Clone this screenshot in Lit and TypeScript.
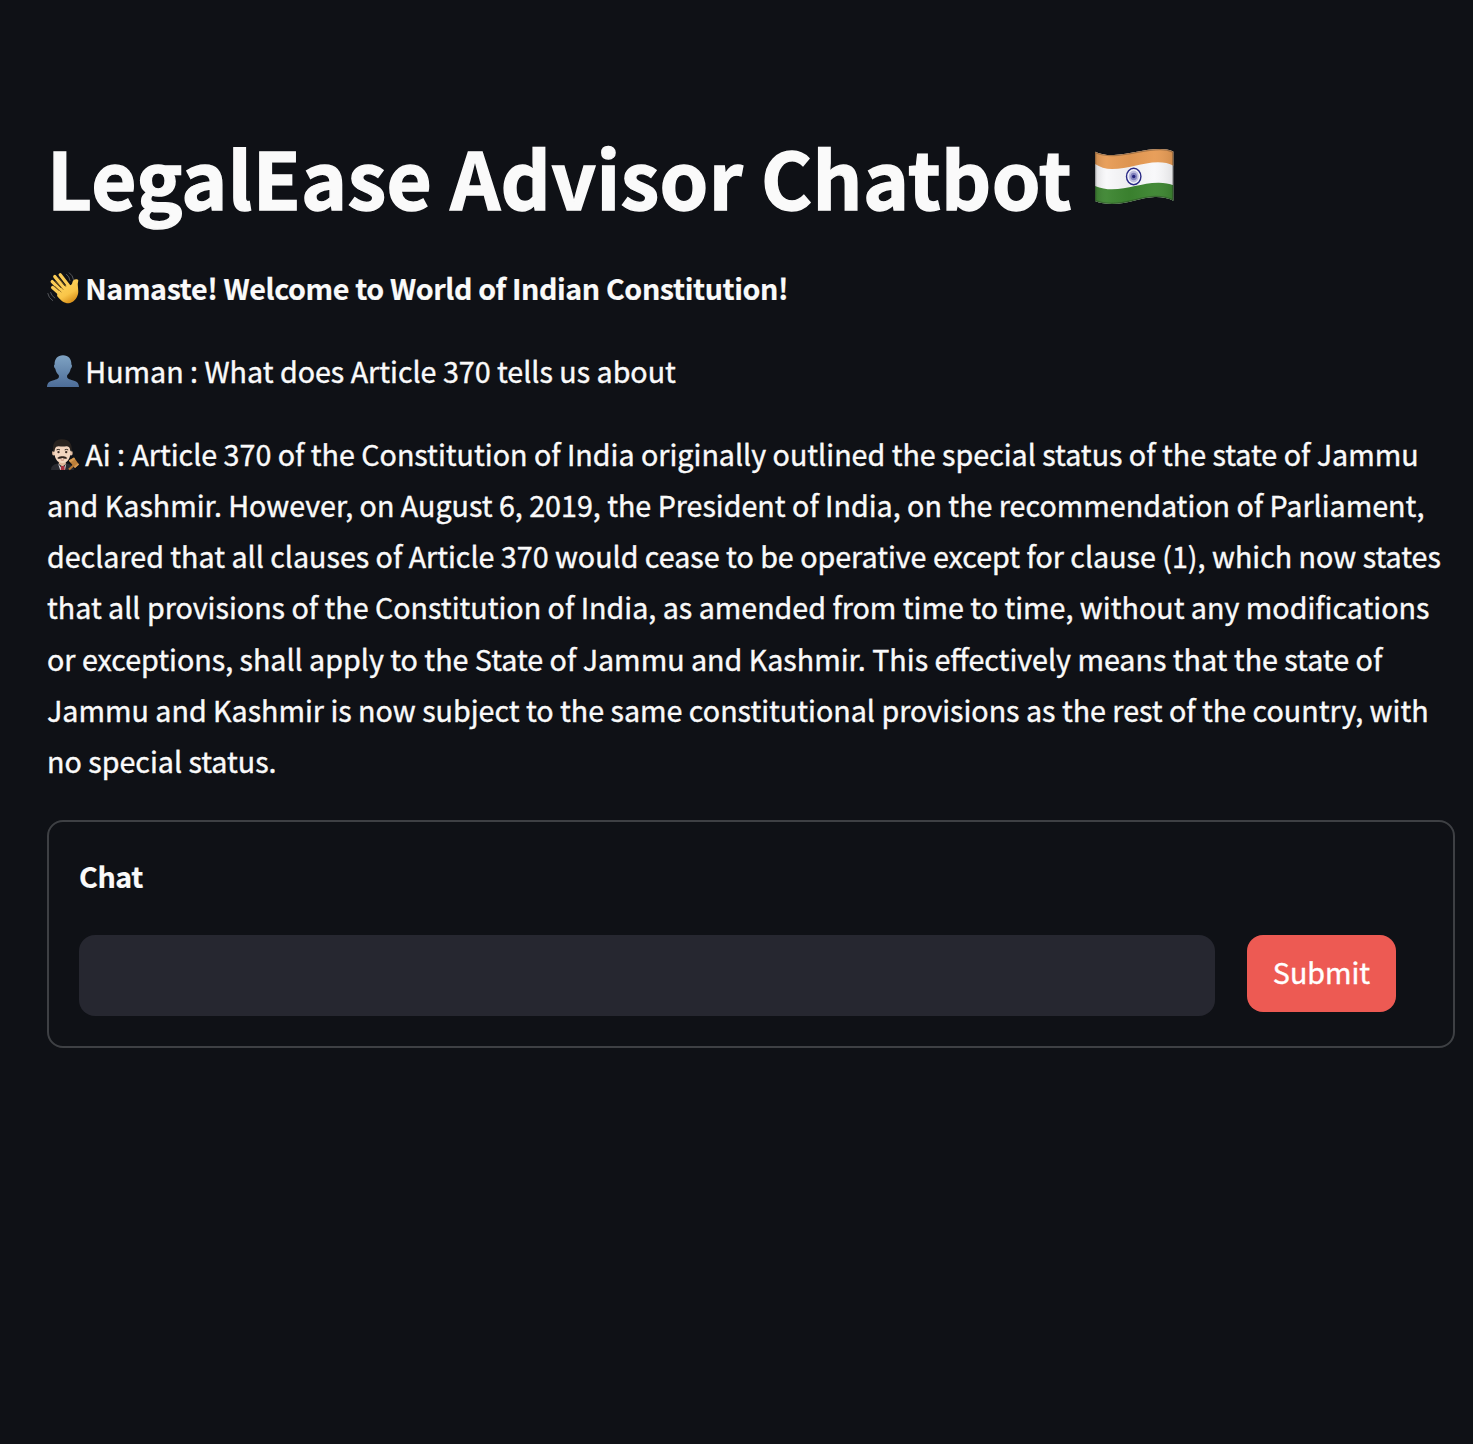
import { LitElement, html, css } from "lit";
import { customElement } from "lit/decorators.js";

const flag = html`<svg class="flag" viewBox="0 0 80 58" role="img" aria-label="India">
  <defs>
    <clipPath id="cloth"><path d="M1 3.700C7 6.500 13 7.300 20 7C36 6.300 50 1 66 1C71 1 75 1.700 79.300 3.500V52.700C74 50 68 48.800 61 49C46 49.500 34 56 18 56C12 56 6 55.300 1 53Z" /></clipPath>
    <linearGradient id="shade" x1="0" x2="1" y1="0" y2="0">
      <stop offset="0" stop-color="#000" stop-opacity=".14" />
      <stop offset=".16" stop-color="#fff" stop-opacity=".05" />
      <stop offset=".45" stop-color="#000" stop-opacity=".04" />
      <stop offset=".75" stop-color="#fff" stop-opacity=".04" />
      <stop offset="1" stop-color="#000" stop-opacity=".1" />
    </linearGradient>
  </defs>
  <g clip-path="url(#cloth)">
    <rect width="80" height="58" fill="#f8f8fa" />
    <path d="M0 0H80V17.900C75 15.200 70 14.300 64 14.300C48 14.500 34 21 18 21C11 21 5 18.800 0 15.300Z" fill="#e79b54" />
    <path d="M0 37.500C6 40 12 41.300 18 41.300C34 41 48 35 64 34.700C70 34.600 75 35.500 80 37.500V58H0Z" fill="#3c8530" />
    <rect width="80" height="58" fill="url(#shade)" />
    <path d="M1 3.700C7 6.500 13 7.300 20 7C36 6.300 50 1 66 1C71 1 75 1.700 79.300 3.500V52.700C74 50 68 48.800 61 49C46 49.500 34 56 18 56C12 56 6 55.300 1 53Z" fill="none" stroke="#222" stroke-opacity=".3" stroke-width="2.500" />
  </g>
  <g transform="translate(39.700 28.500)">
    <ellipse rx="7.200" ry="8.200" fill="#f4f4fa" stroke="#2a2a86" stroke-width="1.400" />
    <ellipse rx="5" ry="5.900" fill="#bebee0" />
    <ellipse rx="3.300" ry="3.800" fill="#8484bd" />
    <circle r="1.700" fill="#25257c" />
  </g>
</svg>`;

const wave = html`<svg class="emoji wave" viewBox="0 0 32 32" aria-hidden="true">
  <defs>
    <linearGradient id="skin" x1="0" y1="0" x2=".5" y2="1">
      <stop offset="0" stop-color="#ffd866" />
      <stop offset=".7" stop-color="#f9c548" />
      <stop offset="1" stop-color="#dc961f" />
    </linearGradient>
  </defs>
  <g fill="none" stroke="#fbcc55" stroke-linecap="round" stroke-width="3.300">
    <path d="M13.200 2.800L21.500 13.500" />
    <path d="M7.800 4.600L18 17" />
    <path d="M5.200 9.600L15 19.500" />
    <path d="M5.600 15.600L14 23" />
  </g>
  <path d="M21.300 12.500C22.800 14 25 13.200 25.300 10.800C25.600 8.500 27.200 6.800 29.800 7.200C32.300 7.600 31 9.400 30.800 11.500C30.500 14.500 31.800 18 31 22C29.800 27 26 30.800 21.500 31.300C17 31.300 14 28.500 10.500 24.500C9 22.500 12 18 15 15Z" fill="url(#skin)" />
  <path d="M11.200 5.500L19 14.800M8.300 9.300L16.300 17.700M7.900 14.200L14.400 20.200" fill="none" stroke="#805a18" stroke-width=".8" />
  <path d="M19.500 2.300Q22.500 4.500 23 8.500M22.300 .8Q26 3.500 26.500 7.500M.8 21.500Q1.500 26 5.700 28.600M3.600 20.500Q4.500 24 7.800 26" fill="none" stroke="#55575b" stroke-width="1" stroke-linecap="round" />
</svg>`;

const bust = html`<svg class="emoji" viewBox="0 0 32 32" aria-hidden="true">
  <defs>
    <linearGradient id="blue" x1="0" y1="0" x2="0" y2="1">
      <stop offset="0" stop-color="#7fa3c3" />
      <stop offset="1" stop-color="#4d6d98" />
    </linearGradient>
  </defs>
  <path d="M16 .2C21.500 .2 24.600 4 24.400 9.500C25.500 10 25 13 23.700 13.800C23 17 21.700 18.800 20.200 20.300C19.600 23.300 21 24 24.500 25C29.500 26.200 31.800 27.500 32 32H0C.2 27.500 2.500 26.200 7.500 25C11 24 12.400 23.300 11.800 20.300C10.300 18.800 9 17 8.300 13.800C7 13 6.500 10 7.600 9.500C7.400 4 10.500 .2 16 .2Z" fill="url(#blue)" />
</svg>`;

const judge = html`<svg class="emoji judge" viewBox="0 0 32 32" aria-hidden="true">
  <path d="M4 31C4.200 27.500 5.500 26 10.500 24.600H20C25 26 26.500 27.500 27 31Z" fill="#292a30" />
  <path d="M11 24.500L14 28.500H17L19.300 24.500L18 31H13.200Z" fill="#d9d9de" />
  <path d="M12 20H18.800V25L15.500 27.500L11.800 25Z" fill="#dfb89b" />
  <path d="M14 27H17.400L17.700 31H13.700Z" fill="#a92f3b" />
  <ellipse cx="6.800" cy="14" rx="1.700" ry="2.500" fill="#e6c1a6" />
  <ellipse cx="24" cy="14" rx="1.700" ry="2.500" fill="#e6c1a6" />
  <path d="M7 9C7 4 10 3 15.400 3S23.800 4 23.800 9C23.800 18.500 21.400 24 15.400 24S7 18.500 7 9Z" fill="#f3d6c0" />
  <path d="M6.300 13C5 5 7.700 .6 14.300 .3C21.500 0 26 4.500 24.500 13L23.300 11.500C23 8.500 21.300 6.900 18.300 7.400C14.500 8.200 11.500 6.300 9.300 7.800C7.900 9 7.700 11 7.500 12.500Z" fill="#29231f" />
  <path d="M9.500 10.900Q11.200 9.900 13 10.900M17.700 10.900Q19.400 9.900 21.200 10.900" fill="none" stroke="#302720" stroke-width="1" />
  <circle cx="11.500" cy="13.100" r="1.200" fill="#3b2a22" />
  <circle cx="19.200" cy="13.100" r="1.200" fill="#3b2a22" />
  <path d="M10.200 18.900C11.500 18 13.300 16.700 15.400 17.300C17.500 16.700 19 18 20.400 18.900C19 20.300 16.700 19.700 15.400 19.100C14 19.700 11.600 20.300 10.200 18.900Z" fill="#30221c" />
  <path d="M13.700 20.800Q15.400 21.700 17.100 20.800" fill="none" stroke="#bd7562" stroke-width=".8" />
  <path d="M22 30.500L27 26" stroke="#b47734" stroke-width="2.200" />
  <path d="M21.800 21.500L27 18.500L32 25.500L28 29Z" fill="#bd803a" />
  <path d="M21.800 21.500L27 18.500L28.200 20.200L23.300 23.400ZM26.900 27.700L31 24.200L32 25.500L28 29Z" fill="#d89b52" />
</svg>`;

const answer = [
  "Ai : Article 370 of the Constitution of India originally outlined the special status of the state of Jammu",
  "and Kashmir. However, on August 6, 2019, the President of India, on the recommendation of Parliament,",
  "declared that all clauses of Article 370 would cease to be operative except for clause (1), which now states",
  "that all provisions of the Constitution of India, as amended from time to time, without any modifications",
  "or exceptions, shall apply to the State of Jammu and Kashmir. This effectively means that the state of",
  "Jammu and Kashmir is now subject to the same constitutional provisions as the rest of the country, with",
  "no special status.",
];

@customElement("app-root")
export class AppRoot extends LitElement {
  static styles = css`
    :host {
      display: block;
      box-sizing: border-box;
      min-height: 1444px;
      padding: 137px 18px 0 47px;
      background: #0f1116;
      color: #fafafa;
      font-family: "Noto Sans CJK SC", "Open Sans", sans-serif;
      font-size: 28.65px;
      line-height: 47.6px;
      -webkit-text-stroke: 0.4px currentColor;
    }
    h1, p { margin: 0; }
    h1 {
      display: flex;
      height: 88px;
      font-size: 78px;
      line-height: 78px;
      font-weight: 700;
      letter-spacing: 0.36px;
      white-space: nowrap;
      -webkit-text-stroke-width: 1.4px;
    }
    .flag { width: 80px; height: 58px; margin: 11px 0 0 22px; }
    .messages { display: flex; flex-direction: column; gap: 32px; padding-top: 38.400px; }
    .line { display: flex; height: 51.2px; white-space: nowrap; }
    .emoji { flex: none; width: 32px; height: 32px; margin: 8px 6.300px 0 0; }
    .wave, .judge { margin-top: 9px; }
    .bold { font-weight: 700; letter-spacing: -0.39px; -webkit-text-stroke-width: 0.2px; }
    .greeting { line-height: 49.2px; }
    .form {
      box-sizing: border-box;
      height: 228px;
      margin-top: 32px;
      padding: 30px;
      border: 2px solid #3e4044;
      border-radius: 16px;
    }
    .label { height: 51.2px; }
    .row { display: flex; align-items: flex-start; gap: 32px; margin-top: 32px; }
    input {
      box-sizing: border-box;
      width: 1136px;
      height: 81px;
      padding: 0 24px;
      border: 0;
      border-radius: 16px;
      background: #262730;
      color: inherit;
      font: inherit;
      outline: none;
    }
    button {
      box-sizing: border-box;
      width: 149px;
      height: 77px;
      padding: 0 0 4px;
      border: 0;
      border-radius: 16px;
      background: #ed5a53;
      color: #fff;
      font: inherit;
      -webkit-text-stroke: 0.4px currentColor;
    }
  `;

  render() {
    return html`
      <h1><span>LegalEase Advisor Chatbot</span>${flag}</h1>
      <div class="messages">
        <p class="line bold greeting">${wave}<span>Namaste! Welcome to World of Indian Constitution!</span></p>
        <p class="line">${bust}<span>Human : What does Article 370 tells us about</span></p>
        <p>
          ${answer.map((text, i) => html`<span class="line">${i === 0 ? judge : null}<span>${text}</span></span>`)}
        </p>
      </div>
      <form class="form" @submit=${(e: Event) => e.preventDefault()}>
        <div class="label bold">Chat</div>
        <div class="row">
          <input type="text" aria-label="Chat" />
          <button type="submit">Submit</button>
        </div>
      </form>
    `;
  }
}
